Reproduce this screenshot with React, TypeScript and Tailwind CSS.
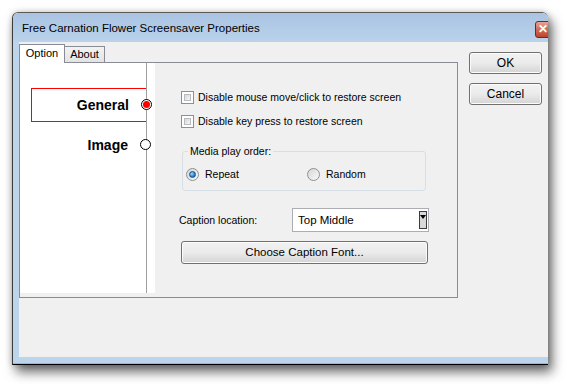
import React from "react";

function CheckBox() {
  return (
    <span className="w-[13px] h-[13px] shrink-0 border border-[#8e8f8f] bg-white p-[2px] flex">
      <span className="flex-1 border border-[#b9bcbf] bg-linear-to-br from-[#d5d7da] to-[#f7f7f7]" />
    </span>
  );
}

function Radio({ checked }: { checked?: boolean }) {
  return (
    <span className="w-[13px] h-[13px] shrink-0 rounded-full border border-[#8e8f8f] bg-linear-to-br from-[#d4d6d9] to-[#fafafa] flex items-center justify-center">
      {checked ? (
        <span className="w-[7px] h-[7px] rounded-full border border-[#1d4f7d] bg-[radial-gradient(circle_at_35%_35%,#9fdcff,#2a7fd0_60%,#15548f)]" />
      ) : null}
    </span>
  );
}

function WinButton({ label, className }: { label: string; className?: string }) {
  return (
    <div
      className={
        "border border-[#707070] rounded-[3px] flex items-center justify-center bg-linear-to-b from-[#f2f2f2] via-[#ebebeb] to-[#d4d4d4] shadow-[inset_0_0_0_1px_#fcfcfc] " +
        (className ?? "")
      }
    >
      {label}
    </div>
  );
}

export default function App() {
  return (
    <div className="w-[567px] h-[385px] bg-white overflow-hidden font-['Liberation_Sans',Arial,sans-serif] text-black">
      <div className="ml-[12px] mt-[12px] w-[536px] h-[353px] flex flex-col rounded-t-[6px] border-l border-t border-b border-l-[#3c3c3c] border-t-[#5a5a5a] border-b-black overflow-hidden shadow-[4px_7px_12px_rgba(0,0,0,0.6),0_0_6px_rgba(0,0,0,0.2)]">
        {/* title bar */}
        <div className="h-[29px] shrink-0 flex items-center bg-linear-to-b from-[#a9c4e2] to-[#bad2eb] pl-[9px]">
          <span className="text-[11.5px] leading-[14px] pt-[1px]">Free Carnation Flower Screensaver Properties</span>
          <div className="ml-auto w-[13px] h-[17px] mt-[3px] overflow-hidden flex">
            <div className="w-[43px] shrink-0 h-[17px] rounded-[3px] border border-[#6d2a23] bg-linear-to-b from-[#e6a597] via-[#cf6a56] to-[#c0412c] flex items-center pl-[2px]">
              <span className="text-white font-bold text-[12px] leading-[12px]">✕</span>
            </div>
          </div>
        </div>

        <div className="flex flex-1">
          <div className="w-[6px] bg-[#bcd4ec]" />
          {/* client */}
          <div className="flex-1 bg-[#f0f0f0] flex items-start pt-[2px]">
            <div className="w-[439px] flex flex-col">
              <div className="flex items-end text-[11px] leading-[13px]">
                <div className="relative z-10 -mb-px w-[46px] h-[19px] border border-b-0 border-[#898c95] bg-white flex items-center justify-center pb-[1px]">
                  Option
                </div>
                <div className="w-[40px] h-[16px] border border-l-0 border-b-0 border-[#898c95] bg-linear-to-b from-[#f3f3f3] to-[#e3e3e3] flex items-center justify-center">
                  About
                </div>
              </div>
              <div className="h-[236px] border border-[#898c95] bg-[#f0f0f0] flex items-start">
                {/* left list */}
                <div className="w-[135px] h-[230px] bg-white">
                  <div className="w-[127px] h-full border-r border-[#a0a0a0] pt-[25px] font-bold text-[14px] leading-[16px]">
                    <div className="relative ml-[11px] h-[34px] border border-r-0 border-[#ff0000] flex items-center justify-end pr-[17px]">
                      General
                      <span className="absolute right-[-6px] top-[10px] w-[11px] h-[11px] rounded-full border border-black bg-white flex items-center justify-center">
                        <span className="w-[7px] h-[7px] rounded-full bg-[#ff0000]" />
                      </span>
                    </div>
                    <div className="relative mt-[6px] ml-[11px] h-[34px] border border-transparent flex items-center justify-end pr-[17px]">
                      Image
                      <span className="absolute right-[-6px] top-[10px] w-[11px] h-[11px] rounded-full border border-black bg-white" />
                    </div>
                  </div>
                </div>

                {/* options */}
                <div className="flex-1 pl-[26px] pt-[28px] text-[10.5px] leading-[13px]">
                  <div className="flex items-center gap-[4px] h-[13px]">
                    <CheckBox />
                    <span>Disable mouse move/click to restore screen</span>
                  </div>
                  <div className="flex items-center gap-[4px] h-[13px] mt-[11px]">
                    <CheckBox />
                    <span>Disable key press to restore screen</span>
                  </div>

                  <div className="relative mt-[23px] ml-[1px] w-[244px] h-[40px] border border-[#d5dfe5] rounded-[3px] flex items-start pt-[16px] pl-[3px]">
                    <span className="absolute left-[5px] top-[-7px] px-[2px] bg-[#f0f0f0]">Media play order:</span>
                    <div className="w-[121px] flex items-center gap-[6px]">
                      <Radio checked />
                      <span>Repeat</span>
                    </div>
                    <div className="flex items-center gap-[6px]">
                      <Radio />
                      <span>Random</span>
                    </div>
                  </div>

                  <div className="mt-[17px] flex items-center">
                    <span className="-ml-[2px] w-[113px]">Caption location:</span>
                    <div className="w-[137px] h-[24px] border border-[#abadb3] bg-white flex items-center pl-[5px] pr-[1px] text-[11.5px]">
                      <span>Top Middle</span>
                      <div className="ml-auto w-[8px] h-[18px] border border-[#3c3c3c] bg-[#d8d8d8] flex justify-center pt-[3px]">
                        <span className="w-0 h-0 border-l-[3px] border-r-[3px] border-t-[4px] border-l-transparent border-r-transparent border-t-black" />
                      </div>
                    </div>
                  </div>

                  <WinButton label="Choose Caption Font..." className="mt-[9px] w-[247px] h-[23px] text-[11.5px]" />
                </div>
              </div>
            </div>

            <div className="ml-[11px] mt-[8px] flex flex-col text-[12px]">
              <WinButton label="OK" className="w-[73px] h-[22px]" />
              <WinButton label="Cancel" className="w-[73px] h-[22px] mt-[9px]" />
            </div>
          </div>
        </div>

        <div className="h-[6px] shrink-0 bg-[#bcd4ec]" />
        <div className="h-[1px] shrink-0 bg-[#6fc9ea]" />
      </div>
    </div>
  );
}
